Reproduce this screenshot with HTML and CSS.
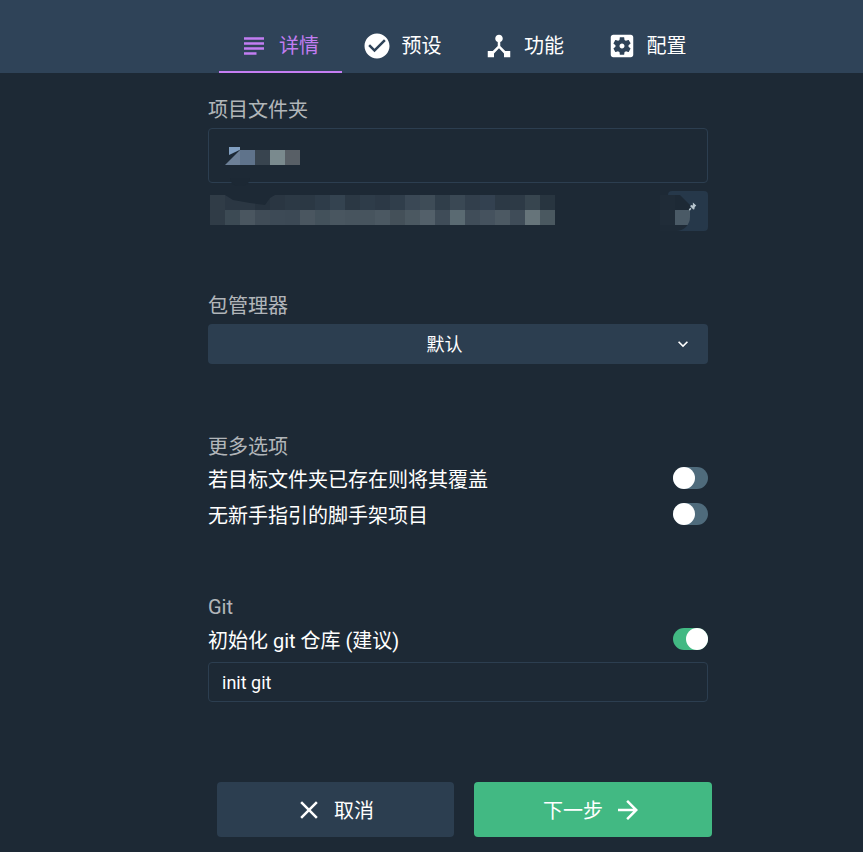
FILE: index.html
```
<!DOCTYPE html>
<html lang="zh-CN">
<head>
<meta charset="utf-8">
<title>项目创建</title>
<link rel="stylesheet" href="styles.css">
</head>
<body>
<nav class="tabs">
  <a class="tab active"><svg class="icon" viewBox="0 0 24 24"><path d="M14 17H4v2h10v-2zm6-8H4v2h16V9zM4 15h16v-2H4v2zM4 5v2h16V5H4z"/></svg><span>详情</span></a>
  <a class="tab"><svg class="icon" viewBox="0 0 24 24"><path d="M12 2C6.48 2 2 6.48 2 12s4.48 10 10 10 10-4.48 10-10S17.52 2 12 2zm-2 15l-5-5 1.41-1.41L10 14.17l7.59-7.59L19 8l-9 9z"/></svg><span>预设</span></a>
  <a class="tab"><svg class="icon" viewBox="0 0 24 24"><path d="M17 16l-4-4V8.82C14.16 8.4 15 7.3 15 6c0-1.66-1.34-3-3-3S9 4.34 9 6c0 1.3.84 2.4 2 2.82V12l-4 4H3v5h5v-3.05l4-4.2 4 4.2V21h5v-5h-4z"/></svg><span>功能</span></a>
  <a class="tab"><svg class="icon" viewBox="0 0 24 24"><path d="M12 10c-1.1 0-2 .9-2 2s.9 2 2 2 2-.9 2-2-.9-2-2-2zm7-7H5c-1.11 0-2 .9-2 2v14c0 1.1.89 2 2 2h14c1.1 0 2-.9 2-2V5c0-1.1-.9-2-2-2zm-1.75 9c0 .23-.02.46-.05.68l1.48 1.16c.13.11.17.3.08.45l-1.4 2.42c-.09.15-.27.21-.43.15l-1.74-.7c-.36.28-.76.51-1.18.69l-.26 1.85c-.03.17-.18.3-.35.3h-2.8c-.17 0-.32-.13-.35-.29l-.26-1.85c-.43-.18-.82-.41-1.18-.69l-1.74.7c-.16.06-.34 0-.43-.15l-1.4-2.42c-.09-.15-.05-.34.08-.45l1.48-1.16c-.03-.23-.05-.46-.05-.69 0-.23.02-.46.05-.68l-1.48-1.16c-.13-.11-.17-.3-.08-.45l1.4-2.42c.09-.15.27-.21.43-.15l1.74.7c.36-.28.76-.51 1.18-.69l.26-1.85c.03-.17.18-.3.35-.3h2.8c.17 0 .32.13.35.29l.26 1.85c.43.18.82.41 1.18.69l1.74-.7c.16-.06.34 0 .43.15l1.4 2.42c.09.15.05.34-.08.45l-1.48 1.16c.03.23.05.46.05.69z"/></svg><span>配置</span></a>
</nav>

<main class="form">
  <section class="group group-first">
    <div class="label">项目文件夹</div>
    <div class="field field-tall">
      <div class="mosaic-name"></div>
    </div>
    <div class="path-row">
      <div class="mosaic-path"></div>
      <button class="path-btn" type="button">
        <span class="mosaic-btn"></span>
        <svg class="pin" viewBox="0 0 24 24"><path d="M13 1l9 8-4 4-1 6-3 1-8-9 2-3 5 1zM6 15l3 3-4 5-3-3z"/></svg>
      </button>
    </div>
  </section>

  <section class="group group-pm">
    <div class="label">包管理器</div>
    <div class="select">
      <span class="select-value">默认</span>
      <svg class="chevron" viewBox="0 0 24 24"><path d="M7.41 8.59L12 13.17l4.59-4.58L18 10l-6 6-6-6z"/></svg>
    </div>
  </section>

  <section class="group group-more">
    <div class="label">更多选项</div>
    <div class="row"><span>若目标文件夹已存在则将其覆盖</span><span class="toggle"><i class="knob"></i></span></div>
    <div class="row"><span>无新手指引的脚手架项目</span><span class="toggle"><i class="knob"></i></span></div>
  </section>

  <section class="group group-git">
    <div class="label">Git</div>
    <div class="row"><span>初始化 git 仓库 (建议)</span><span class="toggle on"><i class="knob"></i></span></div>
    <div class="field field-short"><span class="field-text">init git</span></div>
  </section>
</main>

<footer class="actions">
  <button class="btn btn-cancel" type="button"><svg class="icon" viewBox="0 0 24 24"><path d="M19 6.41L17.59 5 12 10.59 6.41 5 5 6.41 10.59 12 5 17.59 6.41 19 12 13.41 17.59 19 19 17.59 13.41 12z"/></svg><span>取消</span></button>
  <button class="btn btn-next" type="button"><span>下一步</span><svg class="icon" viewBox="0 0 24 24"><path d="M12 4l-1.41 1.41L16.17 11H4v2h12.17l-5.58 5.59L12 20l8-8z"/></svg></button>
</footer>
</body>
</html>
```

FILE: styles.css
```
* { box-sizing: border-box; }

html, body { height: 100%; }

body {
  margin: 0;
  overflow: hidden;
  background: #1d2935;
  color: #fff;
  font-family: Roboto, "Noto Sans CJK SC", sans-serif;
  font-size: 20px;
}

.icon {
  width: 30px;
  height: 30px;
  fill: currentColor;
  flex: none;
}

/* header tabs */
.tabs {
  display: flex;
  height: 73px;
  padding-left: 219px;
  background: #2f4358;
}

.tab {
  width: 122.5px;
  height: 73px;
  padding: 31px 0 0 20px;
  display: flex;
  align-items: flex-start;
  gap: 10px;
  line-height: 30px;
  color: #fff;
  border-bottom: 2px solid transparent;
}

.tab.active {
  color: #c27df2;
  border-bottom-color: #c67ef3;
}

/* form */
.form {
  width: 500px;
  margin-left: 208px;
}

.group-first { padding-top: 22px; }
.group-pm { margin-top: 60px; }
.group-more { margin-top: 68px; }
.group-git { margin-top: 61px; }

.label {
  height: 28px;
  line-height: 30px;
  margin-bottom: 5px;
  color: rgba(255, 255, 255, 0.68);
}

.group-more .label,
.group-git .label { margin-bottom: 0; }

.group-git .label { line-height: 28px; }

.field {
  position: relative;
  border: 1px solid #2c3e50;
  border-radius: 4px;
  display: flex;
  align-items: center;
  padding: 0 13px;
}

.field-tall { height: 55px; }

/* smudge that hides part of the input border */
.field-tall::after {
  content: "";
  position: absolute;
  left: 21px;
  bottom: -4px;
  width: 20px;
  height: 8px;
  border-radius: 0 0 8px 8px;
  background: #1c2834;
}

.field-short {
  height: 40px;
  margin-top: 5px;
}

.field-text { font-size: 18px; }

.mosaic-name {
  position: absolute;
  left: 16px;
  top: 21px;
  width: 75px;
  height: 15px;
  background: linear-gradient(90deg, transparent 0 15px, #5f738b 0 30px, #38444f 0 45px, #7a8a8e 0 60px, #585f66 0);
}

/* lower triangle of the first cell */
.mosaic-name::before {
  content: "";
  position: absolute;
  left: 0;
  top: 0;
  width: 15px;
  height: 15px;
  background: #6d8097;
  clip-path: polygon(0 100%, 100% 0, 100% 100%);
}

/* upper fragment of the first cell */
.mosaic-name::after {
  content: "";
  position: absolute;
  left: 4px;
  top: -3px;
  width: 11px;
  height: 8px;
  background: #82a0c2;
  clip-path: polygon(0 0, 100% 0, 100% 35%, 0 100%);
}

.path-row {
  position: relative;
  height: 40px;
  margin-top: 8px;
  display: flex;
  justify-content: flex-end;
}

.mosaic-path {
  position: absolute;
  left: 2px;
  top: 4px;
  width: 345px;
  height: 30px;
  background:
    linear-gradient(90deg, #303c47 0 15px, #2b3743 0 45px, #26323e 0 60px, #2a3642 0 75px, #2c3945 0 90px, #2b3844 0 105px, #2e3c49 0 120px, #344350 0 135px, #2b3844 0 150px, #2e3c49 0 165px, #2c3946 0 180px, #303e4b 0 195px, #3a4855 0 210px, #3e4c57 0 225px, #303e4a 0 240px, #3a4854 0 255px, #323f4c 0 270px, #334150 0 285px, #2c3945 0 300px, #2d3a46 0 315px, #37454f 0 330px, #283540 0) top / 100% 15px no-repeat,
    linear-gradient(90deg, #303c47 0 15px, #3c4a54 0 30px, #4a5660 0 45px, #404c57 0 60px, #3d4a56 0 75px, #3c4955 0 90px, #4a5660 0 105px, #43515b 0 120px, #495660 0 135px, #47545e 0 165px, #4b5862 0 180px, #445059 0 195px, #4b5861 0 210px, #53606a 0 225px, #3f4c58 0 240px, #5a6a72 0 255px, #404d59 0 270px, #45525e 0 285px, #4c5963 0 300px, #3f4c58 0 315px, #66747a 0 330px, #4a5860 0) bottom / 100% 15px no-repeat;
}

/* brush stroke across the top of the first mosaic row */
.mosaic-path::before {
  content: "";
  position: absolute;
  left: 15px;
  top: 0;
  width: 52px;
  height: 11px;
  background: #1d2935;
  clip-path: polygon(0 0, 8px 5px, 25px 8px, 40px 10px, 45px 3px, 50px 0);
}

.path-btn {
  position: relative;
  width: 40px;
  height: 40px;
  padding: 0;
  border: 0;
  border-radius: 4px;
  background: #26384a;
}

.mosaic-btn {
  position: absolute;
  left: -8px;
  top: 4px;
  width: 30px;
  height: 36px;
  border-radius: 0 0 14px 0;
  clip-path: polygon(0 0, 20px 0, 30px 10px, 30px 100%, 0 100%);
  background:
    linear-gradient(90deg, #1f2b37 0 15px, #1d2935 0) top / 100% 15px no-repeat,
    linear-gradient(90deg, #202c38 0 15px, #4a5a66 0) 0 15px / 100% 15px no-repeat,
    #1e2a36;
}

.pin {
  position: absolute;
  left: 20px;
  top: 11px;
  width: 9px;
  height: 9px;
  fill: #b8c6cf;
}

.select {
  height: 40px;
  display: flex;
  align-items: center;
  padding-right: 15px;
  border-radius: 4px;
  background: #2c3e50;
  font-size: 18px;
}

.select-value {
  flex: 1;
  padding-left: 8px;
  padding-bottom: 2px;
  text-align: center;
}

.chevron {
  width: 20px;
  height: 20px;
  fill: #fff;
}

.row {
  height: 36px;
  display: flex;
  align-items: center;
  justify-content: space-between;
}

.toggle {
  width: 35px;
  height: 22px;
  border-radius: 11px;
  background: #4f6b7c;
  display: flex;
  justify-content: flex-start;
}

.toggle.on {
  background: #42b983;
  justify-content: flex-end;
}

.knob {
  width: 22px;
  height: 22px;
  border-radius: 50%;
  background: #fff;
}

/* footer */
.actions {
  display: flex;
  gap: 20px;
  margin: 80px 0 0 217px;
}

.btn {
  height: 55px;
  padding: 0;
  display: flex;
  align-items: center;
  justify-content: center;
  gap: 10px;
  border: 0;
  border-radius: 4px;
  color: #fff;
  font: inherit;
}

.btn-cancel {
  width: 237px;
  padding-right: 3px;
  background: #2c3e50;
}

.btn-next {
  width: 238px;
  background: #42b983;
}
```
